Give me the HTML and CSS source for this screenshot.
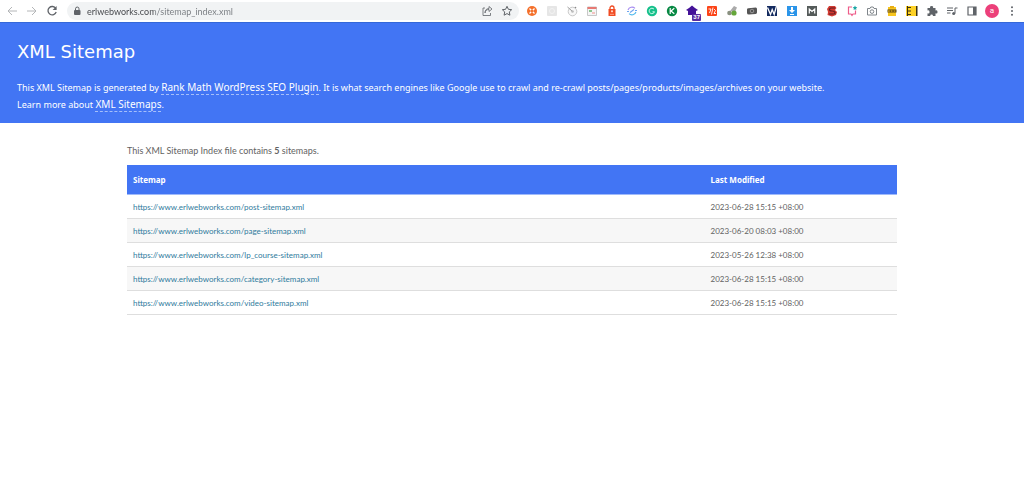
FILE: index.html
```html
<!DOCTYPE html>
<html lang="en">
<head>
<meta charset="utf-8">
<title>XML Sitemap</title>
<link rel="stylesheet" href="styles.css">
</head>
<body>
<nav class="toolbar" aria-label="Browser toolbar">
  <div class="nav-buttons">
    <button class="tool" aria-label="Back"><svg class="muted" viewBox="0 0 12 12"><path d="M11 6H2M6 2L2 6l4 4"/></svg></button>
    <button class="tool" aria-label="Forward"><svg class="muted" viewBox="0 0 12 12"><path d="M1 6h9M6 2l4 4-4 4"/></svg></button>
    <button class="tool" aria-label="Reload"><svg class="line" viewBox="0 0 12 12"><path d="M9.800 3.500A4.200 4.200 0 1 0 10.200 7" stroke-width="1.300"/><path d="M10.600 1v4H6.600z" fill="#5f6368" stroke="none"/></svg></button>
  </div>
  <div class="address">
    <svg class="lock" viewBox="0 0 12 12"><rect x="3" y="5" width="6.500" height="5" rx="1" fill="#5f6368"/><path d="M4.500 5V3.800a1.700 1.700 0 0 1 3.500 0V5" fill="none" stroke="#5f6368"/></svg>
    <input class="url" type="text" aria-label="Address" value="erlwebworks.com/sitemap_index.xml">
    <button class="tool" aria-label="Share"><svg class="line" viewBox="0 0 12 12"><path d="M4 3H2v7.500h7.500V8M4 8c.3-2.500 1.700-3.500 4-3.500V6.500L11 4 8 1.500v2C5.500 3.600 4 5 4 8z" stroke-width=".8"/></svg></button>
    <button class="tool" aria-label="Bookmark"><svg class="line" viewBox="0 0 12 12"><path d="M6 1.300l1.400 3 3.300.4-2.400 2.200.6 3.300L6 8.600l-2.900 1.600.6-3.300-2.400-2.200 3.300-.4z"/></svg></button>
  </div>
  <div class="extensions">
    <button class="tool" aria-label="Extension 1"><svg viewBox="0 0 12 12"><circle cx="6" cy="6" r="5" fill="#f4702b"/><path d="M3.500 3.500l5 5M8.500 3.500l-5 5" stroke="#fff" stroke-width="1.300"/><circle cx="6" cy="6" r="1.200" fill="#f4702b"/></svg></button>
    <button class="tool" aria-label="Extension 2"><svg viewBox="0 0 12 12"><rect x="1" y="1" width="10" height="10" rx="1" fill="#e6e6e6"/><circle cx="6" cy="6" r="2.500" fill="none" stroke="#f3f3f3"/></svg></button>
    <button class="tool" aria-label="Extension 3"><svg viewBox="0 0 12 12"><circle cx="6.500" cy="6.500" r="4.300" fill="#f8f8f8" stroke="#bbb" stroke-width=".8"/><path d="M1.500 2l4.500 4" stroke="#999" fill="none"/><circle cx="6.500" cy="6.500" r="1.300" fill="#bbb"/><circle cx="9.500" cy="2.500" r=".8" fill="#888"/></svg></button>
    <button class="tool" aria-label="Extension 4"><svg viewBox="0 0 12 12"><path d="M1.500 2h9v8.500h-9z" fill="#f5f5f5" stroke="#bbb" stroke-width=".8"/><path d="M1.500 2h9v2h-9z" fill="#e77973"/><path d="M3 5h3v2H3z" fill="#8bc58d"/><path d="M6 7h3v2H6z" fill="#f3c3c0"/></svg></button>
    <button class="tool" aria-label="Extension 5"><svg viewBox="0 0 12 12"><path d="M2.500 4h7v7h-7z" fill="#f04b23"/><path d="M4 5V3a2 2 0 0 1 4 0v2" fill="none" stroke="#f04b23" stroke-width="1.300"/><circle cx="6" cy="6.300" r="1.100" fill="#ffd9c8"/><path d="M4 9.300h4" stroke="#ffa58a"/></svg></button>
    <button class="tool" aria-label="Extension 6"><svg viewBox="0 0 12 12" fill="none" stroke-width="1.100"><path d="M2 5a4.300 4.300 0 0 1 7-1.700" stroke="#a78cf0"/><path d="M10 7a4.300 4.300 0 0 1-7 1.700" stroke="#4fb9ed"/><path d="M1 6.500h2M9 5.500h2M4 7.500l4-3" stroke="#6da5ef"/></svg></button>
    <button class="tool" aria-label="Extension 7"><svg viewBox="0 0 12 12"><circle cx="6" cy="6" r="5.200" fill="#16c08b"/><path d="M8 4.200A2.700 2.700 0 1 0 8.500 6.800H6.500" fill="none" stroke="#e5fff5" stroke-width=".9"/></svg></button>
    <button class="tool" aria-label="Extension 8"><svg viewBox="0 0 12 12"><circle cx="6" cy="6" r="5.200" fill="#078843"/><path d="M4.200 3v6M8.300 3.300L5 6l3.300 2.700" fill="none" stroke="#fff" stroke-width="1.200"/></svg></button>
    <button class="tool badge-host" aria-label="Extension 9, 37 items"><svg viewBox="0 0 12 12"><path d="M0 5l3-2 3-2.500L9 3l3 2-2 1v4H2V6z" fill="#441298"/></svg><span class="badge">37</span></button>
    <button class="tool" aria-label="Extension 10"><svg viewBox="0 0 12 12"><rect x="1" y="1" width="10" height="10" rx="1" fill="#fc4317"/><path d="M2.500 4h2.500L3.500 8M7 2.500L5.500 9.500M8 4l1.500 1.500L8 8.500h2" fill="none" stroke="#fff" stroke-width=".9"/></svg></button>
    <button class="tool" aria-label="Extension 11"><svg viewBox="0 0 12 12"><path d="M4 6l4-5 3 1.500L9 7z" fill="#aaa"/><circle cx="3.500" cy="8" r="2.300" fill="#899080"/><circle cx="8" cy="8" r="2.600" fill="#65a63a"/></svg></button>
    <button class="tool" aria-label="Extension 12"><svg viewBox="0 0 12 12"><path d="M1 4.500q0-1.300 1.500-1.300L9.800 2.500q1.200 0 1.200 1.500v3.500q0 1.400-1.300 1.500L3 9.500Q1 9.500 1 8z" fill="#555"/><circle cx="6" cy="6" r="1.800" fill="none" stroke="#aaa" stroke-width=".8"/></svg></button>
    <button class="tool" aria-label="Extension 13"><svg viewBox="0 0 12 12"><path d="M1 1h10v10H1z" fill="#142b60"/><path d="M1.500 2.500l3 7 1.700-5 2 5L10.500 1" fill="none" stroke="#fff" stroke-width="1.300"/></svg></button>
    <button class="tool" aria-label="Extension 14"><svg viewBox="0 0 12 12"><path d="M1 1h10v10H1z" fill="#2b95e9"/><path d="M5 2h2v3h2L6 8 3 5h2zM4 9h4v1H4z" fill="#fff"/></svg></button>
    <button class="tool" aria-label="Extension 15"><svg viewBox="0 0 12 12"><path d="M1 1h10v10H1z" fill="#555b5a"/><path d="M3.300 8.500V4L6 6.500 8.700 4v4.500" fill="none" stroke="#fff" stroke-width="1.200"/></svg></button>
    <button class="tool" aria-label="Extension 16"><svg viewBox="0 0 12 12"><path d="M3 1h6l1.500 2L9 5l2 2-1 3-4 1.500L1.500 10 2 7 1 4z" fill="#d13a32"/><path d="M9 3H5Q3.500 3 3.500 4.500T6 6t3 1.500T7 9H3" fill="none" stroke="#631b20" stroke-width="1.100"/></svg></button>
    <button class="tool" aria-label="Extension 17"><svg viewBox="0 0 12 12"><path d="M6 2H2.500v7H5l1 1.500L7 9h2.500V5.500" fill="none" stroke="#ee5d8a" stroke-width="1.200"/><path d="M9 .5l.7 1.500 1.600.2-1.200 1.200.3 1.600L9 4.300 7.600 5l.3-1.600-1.200-1.200L8.300 2z" fill="#1aa6a4"/></svg></button>
    <button class="tool" aria-label="Extension 18"><svg viewBox="0 0 12 12" fill="none" stroke="#80868b"><path d="M1.500 3.500H4l.8-1.500h2.400L8 3.500h2.500v6.500h-9z"/><circle cx="6" cy="6.600" r="1.800"/></svg></button>
    <button class="tool" aria-label="Extension 19"><svg viewBox="0 0 12 12"><path d="M2 2h8v9H2z" fill="#f7c51f"/><path d="M4 1h4v2H4z" fill="#e8ad12"/><path d="M1.500 4.500h9v3h-9z" fill="#554114"/><path d="M2.500 7V5.500l1.300 1V5M6.500 5.500H5.200v1h1.300M7.500 5.300l2 1.500M9.500 5.300l-2 1.500" fill="none" stroke="#f7c51f" stroke-width=".6"/></svg></button>
    <button class="tool" aria-label="Extension 20"><svg viewBox="0 0 12 12"><path d="M0 1h11v10H0z" fill="#fdd126"/><path d="M1 2.500h4M1 6h4M1 9.500h4M1.500 1v10" stroke="#3d3212"/><path d="M10 1h1.500v10H10z" fill="#3d3212"/></svg></button>
    <button class="tool" aria-label="Extensions"><svg viewBox="0 0 12 12"><path d="M1.500 3h2.700a1.500 1.500 0 1 1 2.800 0h2.500v2.500a1.500 1.500 0 1 1 0 2.800V11H7a1.400 1.400 0 1 0-2.800 0H1.500V8.300a1.500 1.500 0 1 0 0-2.800z" fill="#5f6368"/></svg></button>
    <button class="tool" aria-label="Media"><svg class="line" viewBox="0 0 12 12"><path d="M1 3h6M1 5.500h6M1 8h3.500M9 8.500V3h2.500"/><circle cx="7.700" cy="8.500" r="1.500" fill="#5f6368" stroke="none"/></svg></button>
    <button class="tool" aria-label="Side panel"><svg viewBox="0 0 12 12"><path d="M2 2h8v8H2z" fill="none" stroke="#5f6368" stroke-width="1.200"/><path d="M7 2h3v8H7z" fill="#5f6368"/></svg></button>
    <button class="tool" aria-label="Profile"><span class="avatar">a</span></button>
    <button class="tool" aria-label="Menu"><svg viewBox="0 0 12 12" fill="#5f6368"><circle cx="6" cy="2.200" r="1"/><circle cx="6" cy="6" r="1"/><circle cx="6" cy="9.800" r="1"/></svg></button>
  </div>
</nav>
<header class="intro">
  <h1>XML Sitemap</h1>
  <p>This XML Sitemap is generated by <a href="#">Rank Math WordPress SEO Plugin</a>. It is what search engines like Google use to crawl and re-crawl posts/pages/products/images/archives on your website.<br>
  Learn more about <a href="#">XML Sitemaps</a>.</p>
</header>
<main class="content">
  <p>This XML Sitemap Index file contains <strong>5</strong> sitemaps.</p>
  <table>
    <thead><tr><th scope="col">Sitemap</th><th scope="col">Last Modified</th></tr></thead>
    <tbody>
      <tr><td><a href="#">https://www.erlwebworks.com/post-sitemap.xml</a></td><td>2023-06-28 15:15 +08:00</td></tr>
      <tr><td><a href="#">https://www.erlwebworks.com/page-sitemap.xml</a></td><td>2023-06-20 08:03 +08:00</td></tr>
      <tr><td><a href="#">https://www.erlwebworks.com/lp_course-sitemap.xml</a></td><td>2023-05-26 12:38 +08:00</td></tr>
      <tr><td><a href="#">https://www.erlwebworks.com/category-sitemap.xml</a></td><td>2023-06-28 15:15 +08:00</td></tr>
      <tr><td><a href="#">https://www.erlwebworks.com/video-sitemap.xml</a></td><td>2023-06-28 15:15 +08:00</td></tr>
    </tbody>
  </table>
</main>
</body>
</html>
```
FILE: styles.css
```css
* { box-sizing: border-box; }
body {
  margin: 0;
  background: #fff;
  color: #626262;
  font-family: "Noto Sans", sans-serif;
  font-size: 9px;
}
.toolbar {
  display: flex;
  align-items: center;
  height: 22px;
  padding: 0 2px;
}
.nav-buttons { display: flex; margin-right: 5px; }
.extensions { display: flex; margin-left: 3px; }
.tool {
  display: flex;
  align-items: center;
  justify-content: center;
  width: 20px;
  height: 20px;
  padding: 0;
  border: 0;
  background: none;
}
.tool svg { width: 12px; height: 12px; }
.line { fill: none; stroke: #5f6368; }
.muted { fill: none; stroke: #b4b6b8; }
.address {
  display: flex;
  flex: 1;
  align-items: center;
  min-width: 0;
  height: 18px;
  padding: 0 2px 0 4px;
  border-radius: 9px;
  background: #f1f3f4;
}
.lock { width: 12px; height: 12px; margin-right: 4px; }
.url {
  flex: 1;
  min-width: 0;
  padding: 0;
  border: 0;
  background: linear-gradient(90deg, #404246 67px, #777b80 67px);
  background-clip: text;
  color: transparent;
  font-family: Lato, sans-serif;
  font-size: 9px;
}
.badge-host { position: relative; }
.badge {
  position: absolute;
  right: 1px;
  bottom: 0;
  padding: 0 1px;
  border-radius: 1px;
  background: #5a2ca0;
  color: #fff;
  font: bold 6px/7px "Liberation Sans", sans-serif;
}
.avatar {
  width: 14px;
  height: 14px;
  border-radius: 50%;
  background: #ec407a;
  color: #fff;
  font: 8px/13px Roboto, sans-serif;
  text-align: center;
}
.intro {
  padding: 17px 17px 10px;
  border-top: 1px solid #3568d8;
  background: #4275f4;
  color: #fff;
}
.intro h1 {
  margin: 0 0 15px;
  font: 18px/24px Verdana, "DejaVu Sans", sans-serif;
}
.intro p { margin: 0; line-height: 17px; }
.intro a {
  border-bottom: 1px dashed #a5bffa;
  color: #fff;
  font-size: 10px;
  text-decoration: none;
}
.content { width: 75.2%; margin: 0 auto; padding-top: 20px; }
.content p { margin: 0 0 6px; font-family: Lato, sans-serif; line-height: 16px; }
table {
  width: 100%;
  table-layout: fixed;
  border-spacing: 0;
}
th, td { padding: 0 6px; border-bottom: 1px solid #dedede; text-align: left; }
th {
  height: 30px;
  border-bottom-color: #a0bafa;
  background: #4275f4;
  color: #fff;
  font-size: 8px;
}
th:first-child { width: 75%; }
td { height: 24px; font-family: Lato, sans-serif; font-size: 8px; }
tbody tr:nth-child(even) { background: #f7f7f7; }
td a { color: #2f7b9d; text-decoration: none; }
```
